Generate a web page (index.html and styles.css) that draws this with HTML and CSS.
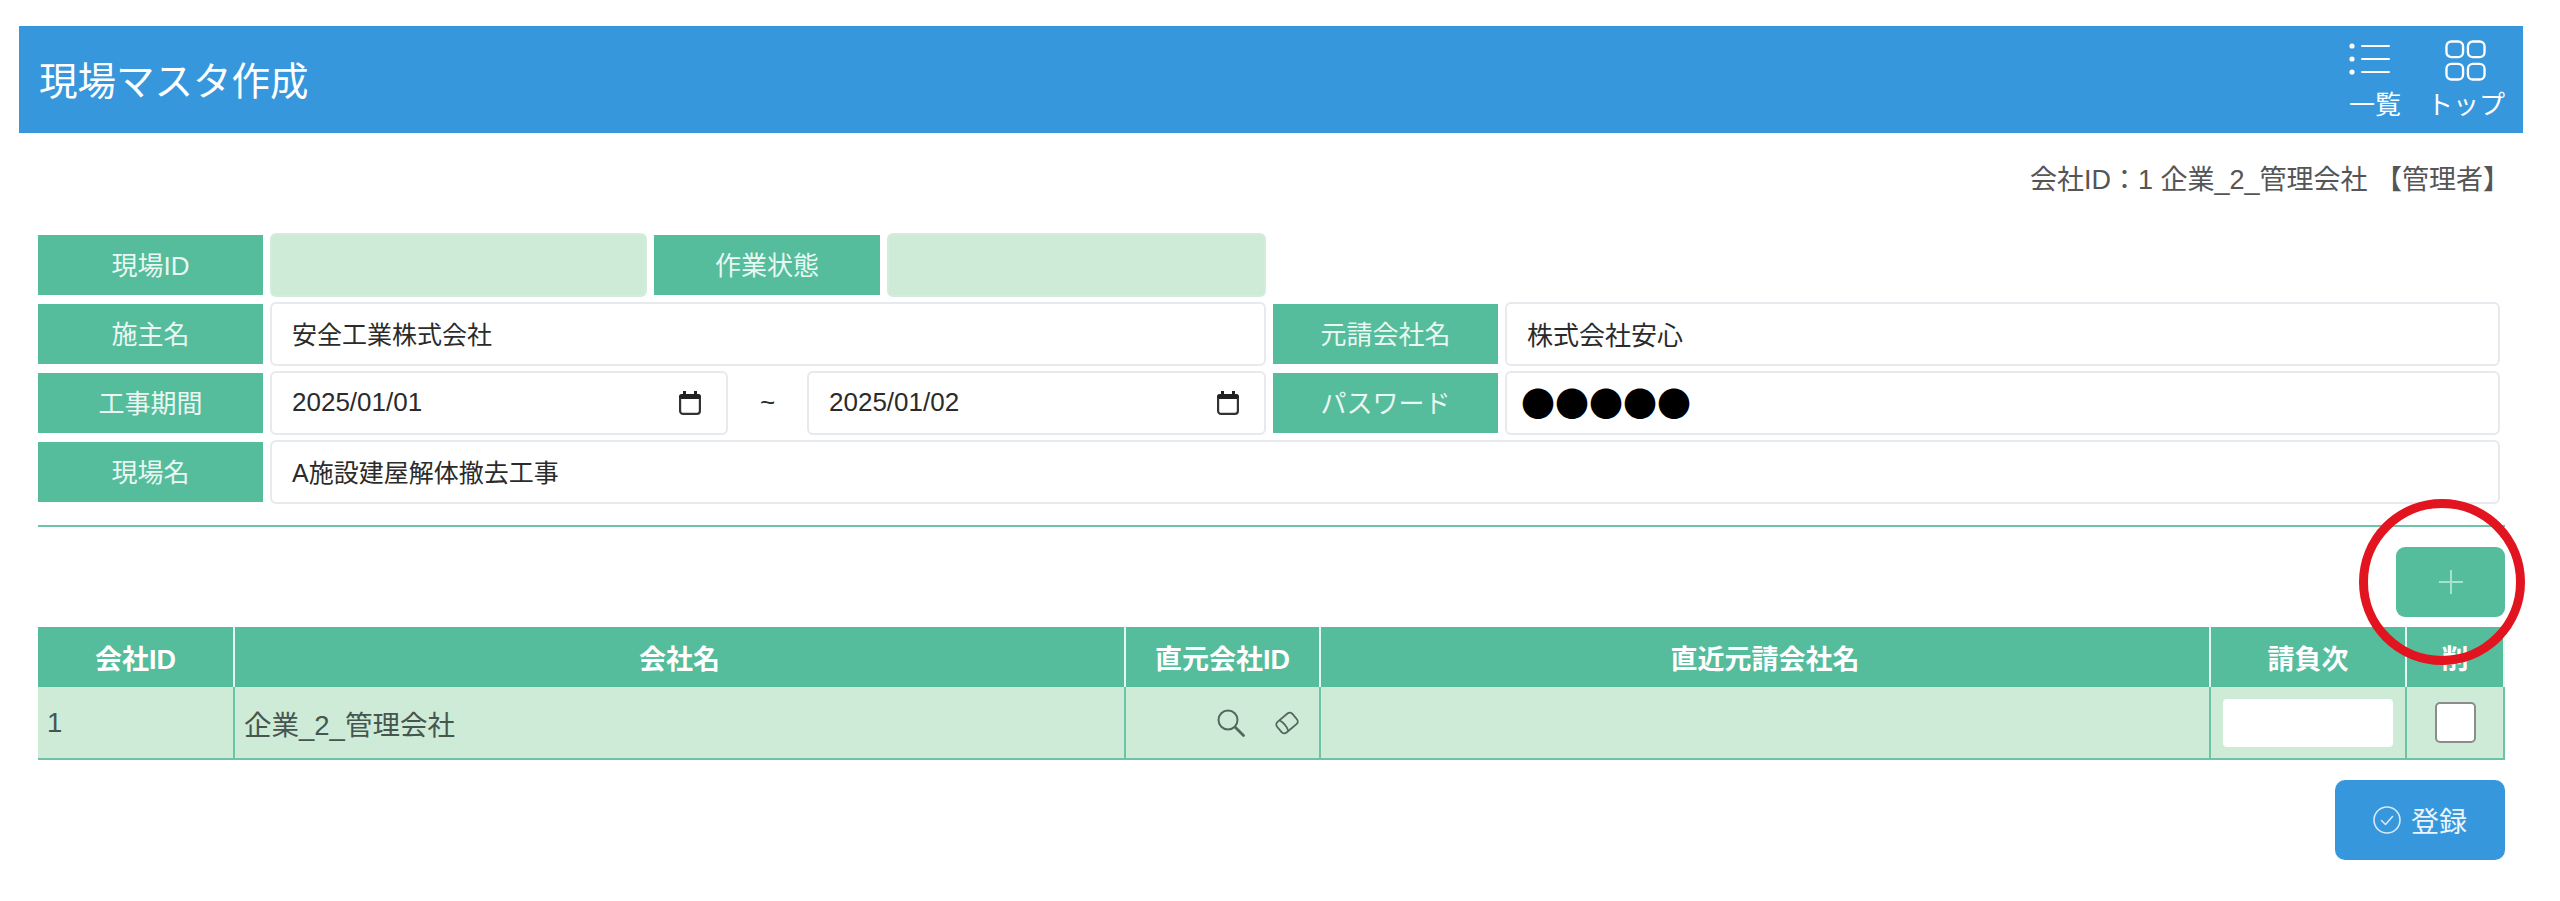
FILE: index.html
```html
<!DOCTYPE html>
<html lang="ja">
<head>
<meta charset="utf-8">
<title>現場マスタ作成</title>
<link rel="stylesheet" href="styles.css">
</head>
<body>
<header class="topbar">
  <h1 class="title">現場マスタ作成</h1>
  <nav class="nav">
    <a class="nav-item nav-list">
      <svg class="nav-icon-list" viewBox="0 0 41 32" fill="none" stroke="#fff" stroke-width="2" stroke-linecap="round"><circle cx="3" cy="3" r="2.6" fill="#fff" stroke="none"/><circle cx="3" cy="16" r="2.6" fill="#fff" stroke="none"/><circle cx="3" cy="29" r="2.6" fill="#fff" stroke="none"/><path d="M13 3h27M13 16h27M13 29h27"/></svg>
      <span>一覧</span>
    </a>
    <a class="nav-item nav-top">
      <svg class="nav-icon-grid" viewBox="0 0 42 42" fill="none" stroke="#fff" stroke-width="2.4"><rect x="1.5" y="1.5" width="17" height="16" rx="5"/><rect x="23.5" y="1.5" width="17" height="16" rx="5"/><rect x="1.5" y="24.5" width="17" height="16" rx="5"/><rect x="23.5" y="24.5" width="17" height="16" rx="5"/></svg>
      <span>トップ</span>
    </a>
  </nav>
</header>

<main class="content">
  <p class="company">会社ID：1 企業_2_管理会社 【管理者】</p>

  <section class="form-grid">
    <div class="label">現場ID</div>
    <div class="field readonly"></div>
    <div class="label">作業状態</div>
    <div class="field readonly"></div>
    <div class="spacer"></div>

    <div class="label">施主名</div>
    <div class="field span-3 text-sm">安全工業株式会社</div>
    <div class="label">元請会社名</div>
    <div class="field">株式会社安心</div>

    <div class="label">工事期間</div>
    <div class="date-range span-3">
      <div class="field date date-from">2025/01/01
        <svg class="cal" viewBox="0 0 24 24" fill="none"><path fill="#222" d="M5 0h3v3h8V0h3v3h1.5A2.5 2.5 0 0 1 23 5.500V8H1V5.500A2.500 2.500 0 0 1 3.500 3H5z"/><path stroke="#333" stroke-width="2.200" d="M2.100 7v13a2.900 2.900 0 0 0 2.900 2.900h14a2.900 2.900 0 0 0 2.900-2.900V7"/></svg>
      </div>
      <div class="tilde">~</div>
      <div class="field date date-to">2025/01/02
        <svg class="cal" viewBox="0 0 24 24" fill="none"><path fill="#222" d="M5 0h3v3h8V0h3v3h1.5A2.5 2.5 0 0 1 23 5.500V8H1V5.500A2.500 2.500 0 0 1 3.500 3H5z"/><path stroke="#333" stroke-width="2.200" d="M2.100 7v13a2.900 2.900 0 0 0 2.900 2.900h14a2.900 2.900 0 0 0 2.900-2.900V7"/></svg>
      </div>
    </div>
    <div class="label">パスワード</div>
    <div class="field password">●●●●●</div>

    <div class="label">現場名</div>
    <div class="field span-all text-sm">A施設建屋解体撤去工事</div>
  </section>

  <hr class="rule">

  <div class="add-row">
    <button class="add-btn" type="button">
      <svg class="plus" viewBox="0 0 24 24" fill="none" stroke="#a5e3d0" stroke-width="2"><path d="M12 0v24M0 12h24"/></svg>
      <span class="annotation"></span>
    </button>
  </div>

  <table class="members">
    <colgroup>
      <col class="c-first"><col class="c-name"><col class="c-id"><col class="c-name2"><col class="c-tier"><col class="c-del">
    </colgroup>
    <thead>
      <tr><th>会社ID</th><th>会社名</th><th>直元会社ID</th><th>直近元請会社名</th><th>請負次</th><th>削</th></tr>
    </thead>
    <tbody>
      <tr>
        <td>1</td>
        <td>企業_2_管理会社</td>
        <td>
          <div class="tools">
            <svg class="ico-search" viewBox="0 0 28 28" fill="none" stroke="#55665d" stroke-width="2" stroke-linecap="round"><circle cx="11" cy="11" r="9.500"/><path d="M18.500 18.500l8 8" stroke-width="2.800"/></svg>
            <svg class="ico-eraser" viewBox="0 0 26 24" fill="none" stroke="#55665d" stroke-width="1.800" stroke-linejoin="round"><g transform="rotate(-40 13 12)"><rect x="3" y="5" width="20" height="14" rx="3.500"/><path d="M9 5c1.500 4 1.500 10 0 14"/></g></svg>
          </div>
        </td>
        <td></td>
        <td class="tier-cell"><div class="tier-input"></div></td>
        <td class="del-cell"><div class="check"></div></td>
      </tr>
    </tbody>
  </table>

  <div class="actions">
    <button class="save-btn" type="button">
      <svg class="ico-check" viewBox="0 0 28 28" fill="none" stroke="#d5eafa" stroke-width="1.6" stroke-linecap="round" stroke-linejoin="round"><circle cx="14" cy="14" r="13"/><path d="M8.500 14.500l4 4 7-8"/></svg>
      <span>登録</span>
    </button>
  </div>
</main>
</body>
</html>
```

FILE: styles.css
```css
* { box-sizing: border-box; }
html, body { margin: 0; padding: 0; background: #fff; }
body {
  padding-top: 26px;
  font-family: "Liberation Sans", "Noto Sans CJK JP", sans-serif;
  font-size: 26px;
  color: #2b2b2b;
}
.topbar {
  margin: 0 37px 0 19px;
  height: 107px;
  background: #3797dc;
  color: #fff;
  display: flex;
  align-items: center;
  justify-content: space-between;
  padding: 0 18px 0 20px;
}
.title { margin: 0 0 3px; font-size: 38.5px; font-weight: 400; }
.nav { display: flex; gap: 26px; align-self: stretch; }
.nav-item {
  display: flex;
  flex-direction: column;
  align-items: center;
  font-size: 26px;
  line-height: 30px;
  padding-top: 14px;
}
.nav-item span { margin-top: 14px; }
.nav-icon-list { width: 41px; height: 32px; margin: 3px 11px 1px 0; display: block; }
.nav-icon-grid { width: 41px; height: 41px; display: block; margin-bottom: -5px; }

.content { padding: 0 55px 0 38px; }
.company {
  margin: 27px -5px 33px 0;
  line-height: 40px;
  font-size: 27px;
  text-align: right;
  color: #555;
}

.form-grid {
  display: grid;
  grid-template-columns: 225px 377px 226px 379px 225px 1fr;
  column-gap: 7px;
  row-gap: 5px;
  grid-auto-rows: 64px;
  margin-right: 5px;
}
.label {
  background: #55bc9c;
  color: #e9f8f2;
  display: flex;
  align-items: center;
  justify-content: center;
  margin: 2px 0;
  padding-bottom: 3px;
}
.field {
  display: flex;
  align-items: center;
  border: 2px solid #e6e9ed;
  border-radius: 6px;
  padding: 0 20px 2px;
  background: #fff;
}
.text-sm { font-size: 25px; }
.readonly { background: #cdebd6; border-color: #d3ecdc; }
.spacer { grid-column: span 2; }
.span-3 { grid-column: span 3; }
.span-all { grid-column: 2 / -1; }
.date-range { display: flex; align-items: stretch; }
.date { justify-content: space-between; padding-right: 24px; }
.date-from { width: 458px; }
.date-to { flex: 1; }
.tilde { width: 79px; display: flex; align-items: center; justify-content: center; padding-bottom: 2px; }
.cal { width: 24px; height: 24px; display: block; margin-top: 2px; }
.password { font-family: "Noto Sans CJK JP", sans-serif; font-size: 34px; color: #000; padding-left: 14px; }

.rule { margin: 21px 0 20px; border: 0; height: 2px; background: #6cc3a5; }

.add-row { display: flex; justify-content: flex-end; margin-bottom: 10px; }
.add-btn {
  position: relative;
  width: 109px;
  height: 70px;
  border: 0;
  border-radius: 9px;
  background: #55bc9c;
  display: flex;
  align-items: center;
  justify-content: center;
  padding: 0;
}
.plus { width: 24px; height: 24px; display: block; }
.annotation {
  position: absolute;
  left: -37px;
  top: -48px;
  width: 166px;
  height: 166px;
  border: 9px solid #e2141f;
  border-radius: 50%;
}

.members { width: 100%; table-layout: fixed; border-collapse: separate; border-spacing: 0; }
.c-first { width: 197px; }
.c-id { width: 195px; }
.c-name { width: 891px; }
.c-name2 { width: 890px; }
.c-tier { width: 196px; }
.c-del { width: 98px; }
.members th {
  height: 60px;
  padding: 0;
  background: #55bc9c;
  color: #fff;
  font-size: 27px;
  font-weight: 700;
  border-right: 2px solid #e6f6f0;
  text-align: center;
}
.members td {
  height: 73px;
  padding: 0 9px;
  background: #cdebd6;
  color: #46564e;
  font-size: 27.5px;
  border-right: 2px solid #6cc3a5;
  border-bottom: 2px solid #6cc3a5;
}
.tools { display: flex; justify-content: flex-end; align-items: center; gap: 29px; padding-right: 10px; }
.ico-search { width: 28px; height: 28px; display: block; }
.ico-eraser { width: 26px; height: 24px; display: block; }
.members .tier-cell { padding: 0 12px; }
.tier-input { height: 48px; background: #fff; border-radius: 4px; }
.members .del-cell { padding: 0; }
.check {
  width: 41px;
  height: 41px;
  margin: 0 auto;
  background: #fff;
  border: 2px solid #8c8c8c;
  border-radius: 5px;
}

.actions { display: flex; justify-content: flex-end; margin-top: 20px; }
.save-btn {
  width: 170px;
  height: 80px;
  border: 0;
  border-radius: 10px;
  background: #3797dc;
  color: #eaf5fd;
  font: inherit;
  font-size: 28px;
  display: flex;
  align-items: center;
  justify-content: center;
  gap: 10px;
}
.ico-check { width: 28px; height: 28px; display: block; }
```
